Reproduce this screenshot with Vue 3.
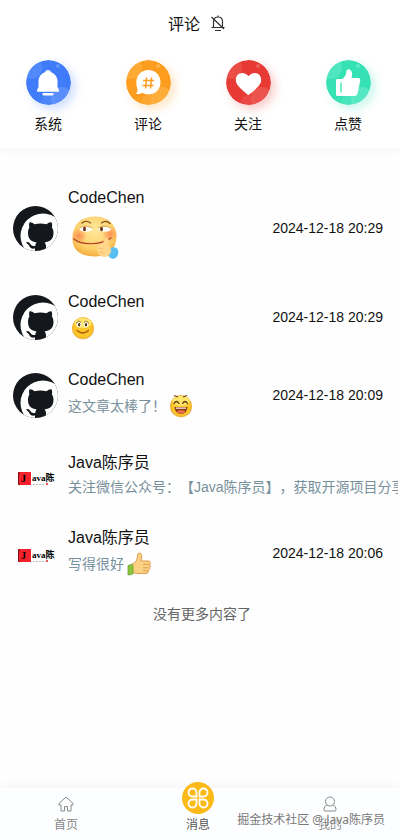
<script setup>
const categories = [
  { key: 'system', label: '系统', color: '#407cfa', light: '#719ffc' },
  { key: 'comment', label: '评论', color: '#fd9d20', light: '#ffbd55' },
  { key: 'follow', label: '关注', color: '#e83a34', light: '#f06b65' },
  { key: 'like', label: '点赞', color: '#36e1b4', light: '#75efd0' },
]

const messages = [
  { id: 1, avatar: 'cat', name: 'CodeChen', text: '', emoji: 'smirk', time: '2024-12-18 20:29' },
  { id: 2, avatar: 'cat', name: 'CodeChen', text: '', emoji: 'smile', time: '2024-12-18 20:29' },
  { id: 3, avatar: 'cat', name: 'CodeChen', text: '这文章太棒了！', emoji: 'laugh', time: '2024-12-18 20:09' },
  { id: 4, avatar: 'java', name: 'Java陈序员', text: '关注微信公众号：【Java陈序员】，获取开源项目分享', emoji: '', time: '' },
  { id: 5, avatar: 'java', name: 'Java陈序员', text: '写得很好', emoji: 'thumb', time: '2024-12-18 20:06' },
]
</script>

<template>
  <div class="page">
    <header class="top">
      <div class="title">
        <h1>评论</h1>
        <button class="mute" aria-label="静音">
          <svg width="16" height="18" viewBox="0 0 16 18" fill="none" stroke="#333" stroke-width="1.2">
            <path d="M3.500 13V7.500C3.500 4.600 5.400 3 8 3s4.500 1.600 4.500 4.500V13M1.500 13.500h13M5 16.500h6M8 1.500V3M1.500 3l12.500 12" />
          </svg>
        </button>
      </div>
      <nav class="categories">
        <a v-for="c in categories" :key="c.key" href="#" class="category">
          <svg class="badge" :class="c.key" viewBox="0 0 45 45">
            <defs>
              <clipPath :id="'clip-' + c.key"><circle cx="22.5" cy="22.5" r="22.5" /></clipPath>
            </defs>
            <g :clip-path="'url(#clip-' + c.key + ')'">
              <rect width="45" height="45" :fill="c.color" />
              <circle cx="5" cy="8" r="11" :fill="c.light" opacity="0.4" />
              <circle cx="36" cy="38" r="11" :fill="c.light" opacity="0.5" />
              <circle cx="22" cy="42" r="7" :fill="c.light" opacity="0.3" />
              <circle cx="32" cy="6" r="2" :fill="c.light" opacity="0.7" />
            </g>
            <g v-if="c.key === 'system'" fill="#fff">
              <path d="M22 10c1.700 0 2.800 1 3 2.300 4 1.400 6.500 4.700 6.500 9v5.700l1.500 3.200c.3.900 0 1.500-.8 1.500H11.800c-.8 0-1.200-.6-.8-1.500l1.500-3.200v-5.700c0-4.300 2.500-7.600 6.500-9 .2-1.300 1.300-2.300 3-2.300z" />
              <rect x="16.5" y="33" width="11" height="2.500" rx="1.200" />
            </g>
            <g v-else-if="c.key === 'comment'">
              <path d="M22.500 10c7 0 12 5.300 12 12.300s-5 12.200-12 12.200c-2.500 0-4.500-.6-6.300-1.700-1.400.8-3.200 1.300-5.200 1.200-.8 0-1-.8-.5-1.300 1-1.100 1.200-2.400.8-3.800-.6-2-1-4.300-1-6.600C10.300 15.300 15.500 10 22.500 10z" fill="#fff" />
              <path d="M20.500 17.500l-1 11M25.500 17.500l-1 11M17 20.500h11M16.500 25.500h11" stroke="#fd9d20" stroke-width="1.500" fill="none" />
            </g>
            <path v-else-if="c.key === 'follow'" d="M22.500 35c-1 0-11-8.500-12.300-12.500C8.700 17.500 11.500 13 16 13c3 0 5 1.500 6.500 3.300C24 14.500 26 13 29 13c4.500 0 7.300 4.500 5.800 9.500C33.500 26.500 23.500 35 22.500 35z" fill="#fff" />
            <g v-else>
              <path d="M10 20.500c0-1 .7-1.500 1.500-1.500h5c3-2.500 3.500-5 4-8 .3-1.500 1.500-2 2.800-1.600 3 1 3.300 4.600 2.200 8.600h6.500c1.800 0 2.600 1.300 2.200 3l-2.700 12.500c-.3 1.600-1.300 2.500-3 2.500h-17C10.500 36 10 35.300 10 34.500z" fill="#fff" />
              <path d="M15 23v9" stroke="#36e1b4" stroke-width="1.300" stroke-linecap="round" />
            </g>
          </svg>
          <span>{{ c.label }}</span>
        </a>
      </nav>
    </header>

    <main class="content">
      <ul class="list">
        <li v-for="m in messages" :key="m.id" class="row" :class="{ plain: !m.emoji }">
          <svg v-if="m.avatar === 'cat'" class="avatar" viewBox="0 0 45 45">
            <defs>
              <clipPath :id="'avatar-' + m.id"><circle cx="22.5" cy="22.5" r="22.5" /></clipPath>
            </defs>
            <g :clip-path="'url(#avatar-' + m.id + ')'">
              <rect width="45" height="45" fill="#14181c" />
              <circle cx="30" cy="30" r="22.5" fill="#fff" />
              <path d="M16.500 16.200c1.500-.3 3.500.7 5 2 4-.9 8-.9 12 0 1.500-1.300 3.500-2.300 5-2 .8 1.700.8 3.800.4 5.300 1.200 1.500 1.600 3.300 1.600 5.500 0 6-3.500 8.700-9 9.500 1 1 1.500 2.300 1.500 4V46H22v-3.500c-4 .6-5-1-6-3-.6-1-1.400-1.600-2.300-2.200-1.100-.8.1-1.700 1.300-1.200 2.700 1 2.900 4 5.300 4h2c0-1.500.5-2.700 1.300-3.600-5.300-.8-8.600-3.500-8.600-9.500 0-2.200.4-4 1.400-5.500-.5-1.500-.5-3.600.1-5.300z" fill="#14181c" />
            </g>
          </svg>
          <svg v-else class="avatar" viewBox="0 0 45 45">
            <rect x="5" y="18" width="13" height="13" fill="#f5222d" />
            <path d="M5.500 19v11l1.500 1M6.500 18l-1 3" stroke="#7a1015" fill="none" />
            <text x="8" y="28" class="logo-initial">J</text>
            <text x="19" y="27" class="logo-word">ava陈</text>
            <path d="M20 30.500h11" stroke="#bbb" stroke-width="1" stroke-dasharray="2 1" />
            <rect x="33" y="29" width="2" height="2" fill="#e9525a" />
          </svg>
          <div class="body">
            <div class="name">{{ m.name }}</div>
            <div class="message">
              <span v-if="m.text">{{ m.text }}</span>
              <svg v-if="m.emoji === 'smirk'" class="emoji large" viewBox="0 0 50 50">
                <defs>
                  <radialGradient id="skin" cx=".5" cy=".35" r=".65">
                    <stop offset="0" stop-color="#ffe89a" />
                    <stop offset=".7" stop-color="#fcd06a" />
                    <stop offset="1" stop-color="#f5ad3e" />
                  </radialGradient>
                  <radialGradient id="blush">
                    <stop offset="0" stop-color="#fb7046" stop-opacity=".7" />
                    <stop offset="1" stop-color="#fb7046" stop-opacity="0" />
                  </radialGradient>
                </defs>
                <path d="M23 2.500C37 2 45 10 45.500 22c0 13-8 20.500-22 20.500C10 42.500 1 36 1.500 24 2 11 9 3 23 2.500z" fill="url(#skin)" />
                <ellipse cx="8" cy="22" rx="8" ry="8" fill="url(#blush)" />
                <ellipse cx="39" cy="20" rx="8" ry="8" fill="url(#blush)" />
                <ellipse cx="15" cy="15" rx="6.500" ry="2.700" fill="#fff" />
                <ellipse cx="33.500" cy="15" rx="6.500" ry="2.700" fill="#fff" />
                <ellipse cx="13.500" cy="15" rx="1.500" ry="2.200" fill="#6b3519" />
                <ellipse cx="30.500" cy="15" rx="1.500" ry="2.200" fill="#6b3519" />
                <path d="M8.500 14q6-3.500 13 0M27 14q6-3.500 13 0" fill="none" stroke="#d99a45" stroke-width=".9" />
                <path d="M11 9q4-3.500 8.500 0M30.500 9q4.500-3.500 8.500.500" fill="none" stroke="#7a4a1c" stroke-width="1.200" stroke-linecap="round" />
                <path d="M3 25c7 6 25 7 37-1" fill="none" stroke="#b03a24" stroke-width="1.200" stroke-linecap="round" />
                <path d="M38 35c4-3 8-2 9 1 1 5-1 8-5 9-4-1-6-4-6-7z" fill="#58bdf1" />
                <path d="M26 35c0-4 2-5 5.500-5.500l2.500-4.500c1.500-2 4-1 3.500 1.500L37 31c3 2 4 5 2 9-3 5-13 4-13-5z" fill="#ffd68c" />
                <path d="M27.500 34l5 1M28 38l5 1" fill="none" stroke="#efb35d" stroke-width=".7" />
              </svg>
              <svg v-else-if="m.emoji === 'smile'" class="emoji" viewBox="0 0 24 24">
                <ellipse cx="12" cy="14" rx="11" ry="9.500" fill="#d58a12" opacity=".3" />
                <circle cx="12" cy="12" r="10.500" fill="#fcc52a" stroke="#e99c17" stroke-width=".7" />
                <ellipse cx="12" cy="7" rx="8.500" ry="5" fill="#ffe66c" />
                <ellipse cx="8" cy="8.500" rx="2.300" ry="3" fill="#fff" />
                <ellipse cx="15" cy="8.500" rx="2.300" ry="3" fill="#fff" />
                <path d="M5.500 7.500q2-4 4.500-1M13 6.500q3-3 4.500 1" fill="none" stroke="#8a5a10" stroke-width=".9" />
                <ellipse cx="8.200" cy="8.700" rx="1.200" ry="1.700" fill="#51300a" />
                <ellipse cx="15" cy="8.700" rx="1.200" ry="1.700" fill="#51300a" />
                <path d="M6 14.500q6 5 11.500 0" fill="none" stroke="#a65708" stroke-width="1.300" stroke-linecap="round" />
              </svg>
              <svg v-else-if="m.emoji === 'laugh'" class="emoji" viewBox="0 0 24 24">
                <ellipse cx="12" cy="14" rx="11" ry="9.500" fill="#d58a12" opacity=".3" />
                <circle cx="12" cy="12" r="10.500" fill="#fcc52a" stroke="#e99c17" stroke-width=".7" />
                <ellipse cx="12" cy="7" rx="8.500" ry="5" fill="#ffe66c" />
                <path d="M5 1.500l4 1.500M14 3l4-1.500" stroke="#65400b" stroke-width="1.300" />
                <path d="M5 9.500q2.500-4 5 0M13.500 9.500q2.500-4 5 0" fill="none" stroke="#613d0b" stroke-width="1.300" stroke-linecap="round" />
                <path d="M5.500 13h13c-.5 4.500-3 7-6.500 7s-6-2.500-6.500-7z" fill="#8c3d10" />
                <path d="M7 13.500h10v1.200H7z" fill="#fff" />
                <ellipse cx="12" cy="17.800" rx="4" ry="1.900" fill="#e66d4c" />
              </svg>
              <svg v-else-if="m.emoji === 'thumb'" class="emoji" viewBox="0 0 24 24">
                <path d="M5 12c4-1 5.500-5 5.500-9 .3-2.500 3.300-2.500 4-.3.600 2 .3 4-.7 6.300h7.700c2 0 2.500 2.500 1 3.300 1.200 1 1 3-.3 3.500.8 1.200.3 2.700-1 3 .3 1.700-.6 2.700-2.200 2.700H11c-2 0-3.500-.5-6-1.500z" fill="#fbd184" stroke="#d99344" stroke-width=".9" />
                <path d="M16 12.300h6M16 15.800h5.500M16 18.800h5" stroke="#d99344" stroke-width=".8" />
                <path d="M1 13.500l3.500-1c1 0 1.500.5 1.500 1.500v7c0 1-.6 1.500-1.500 1.600L1 23z" fill="#8dc63d" stroke="#5d9927" stroke-width=".7" />
              </svg>
            </div>
          </div>
          <time v-if="m.time" class="time">{{ m.time }}</time>
        </li>
      </ul>
      <p class="end">没有更多内容了</p>
    </main>

    <nav class="tabbar">
      <a href="#" class="tab">
        <svg width="16" height="16" viewBox="0 0 16 16" fill="none" stroke="#888" stroke-linejoin="round">
          <path d="M8 1L1 7.500V9h2v6h3.500v-4.500h3V15H13V9h2V7.500z" />
        </svg>
        <span>首页</span>
      </a>
      <a href="#" class="tab active">
        <svg width="32" height="32" viewBox="0 0 32 32" fill="none" stroke="#fff" stroke-width="1.8">
          <circle cx="16" cy="16" r="16" fill="#fbba17" stroke="none" />
          <path d="M14.500 14.500h-4a4 4 0 1 1 4-4zM17.500 14.500v-4a4 4 0 1 1 4 4zM14.500 17.500v4a4 4 0 1 1-4-4zM17.500 17.500h4a4 4 0 1 1-4 4z" />
        </svg>
        <span>消息</span>
      </a>
      <a href="#" class="tab">
        <svg width="16" height="16" viewBox="0 0 16 16" fill="none" stroke="#888" stroke-linejoin="round">
          <circle cx="8" cy="5.5" r="4.500" />
          <path d="M5 9c-2 .8-3 2.500-3 5 0 .7.400 1 1 1h10c.6 0 1-.3 1-1 0-2.500-1-4.200-3-5" />
        </svg>
        <span>我的</span>
      </a>
      <div class="watermark">掘金技术社区 @ Java陈序员</div>
    </nav>
  </div>
</template>

<style>
body {
  margin: 0;
  background: #fefefe;
}
</style>

<style scoped>
.page {
  min-height: 100vh;
  display: flex;
  flex-direction: column;
  overflow: hidden;
  color: #111;
  font-family: "Liberation Sans", "Noto Sans CJK SC", sans-serif;
  text-spacing-trim: space-all;
}
a {
  color: inherit;
  text-decoration: none;
}
.top {
  background: #fff;
  box-shadow: 0 2px 8px #f5f5f5;
}
.title {
  height: 46px;
  padding-right: 6px;
  display: flex;
  align-items: center;
  justify-content: center;
  gap: 10px;
}
h1 {
  margin: 0;
  font-size: 16px;
  font-weight: 400;
}
.mute {
  display: flex;
  padding: 0;
  border: 0;
  background: none;
}
.categories {
  display: grid;
  grid-template-columns: repeat(4, 1fr);
  padding: 14px 0;
}
.category {
  display: flex;
  flex-direction: column;
  align-items: center;
  gap: 9px;
  padding-right: 4px;
  font-size: 14px;
  line-height: 20px;
}
.badge {
  width: 45px;
  height: 45px;
  border-radius: 50%;
}
.system { box-shadow: 4px 4px 10px #407cfa44; }
.comment { box-shadow: 4px 4px 10px #fd9d2044; }
.follow { box-shadow: 4px 4px 10px #e83a3444; }
.like { box-shadow: 4px 4px 10px #36e1b444; }
.content {
  flex: 1;
  padding-top: 30px;
}
.list {
  margin: 0;
  padding: 0;
  list-style: none;
}
.row {
  display: flex;
  align-items: center;
  gap: 10px;
  min-height: 78px;
  padding: 9px 17px 9px 13px;
  box-sizing: border-box;
}
.row.plain {
  min-height: 80px;
  padding-top: 13px;
  padding-right: 2px;
}
.row.plain .message {
  min-height: 26px;
}
.avatar {
  flex: none;
  width: 45px;
  height: 45px;
}
.logo-initial {
  font: bold 10px "Liberation Serif", serif;
}
.logo-word {
  font: bold 9px "Liberation Serif", "Noto Sans CJK SC", serif;
}
.body {
  flex: 1;
  min-width: 0;
  overflow: hidden;
}
.name {
  font-size: 16px;
  line-height: 22px;
}
.message {
  display: flex;
  align-items: center;
  min-height: 30px;
  color: #78909c;
  font-size: 14px;
  line-height: 20px;
  white-space: nowrap;
}
.emoji {
  flex: none;
  width: 24px;
  height: 24px;
  margin: 3px;
}
.emoji.large {
  width: 50px;
  height: 50px;
  margin: 5px 3px;
}
.time {
  font-size: 14px;
}
.end {
  margin: 12px 0;
  padding-left: 4px;
  color: #666;
  font-size: 14px;
  line-height: 20px;
  text-align: center;
}
.tabbar {
  position: relative;
  display: grid;
  grid-template-columns: repeat(3, 1fr);
  height: 52px;
  padding-right: 4px;
  background: #fdfeff;
  box-shadow: 0 -2px 8px #f5f5f5;
}
.tab {
  display: flex;
  flex-direction: column;
  align-items: center;
  justify-content: flex-end;
  gap: 5px;
  height: 45px;
  padding-bottom: 7px;
  color: #888;
  font-size: 12px;
  line-height: 16px;
}
.tab.active {
  gap: 3px;
  color: #555;
}
.tab svg {
  flex: none;
}
.watermark {
  position: absolute;
  right: 15px;
  bottom: 11px;
  color: #777;
  font-family: "Noto Sans", "Noto Sans CJK SC", sans-serif;
  font-size: 12px;
  line-height: 18px;
  text-shadow: 1px 1px 1px #fff;
  white-space: nowrap;
}
</style>
